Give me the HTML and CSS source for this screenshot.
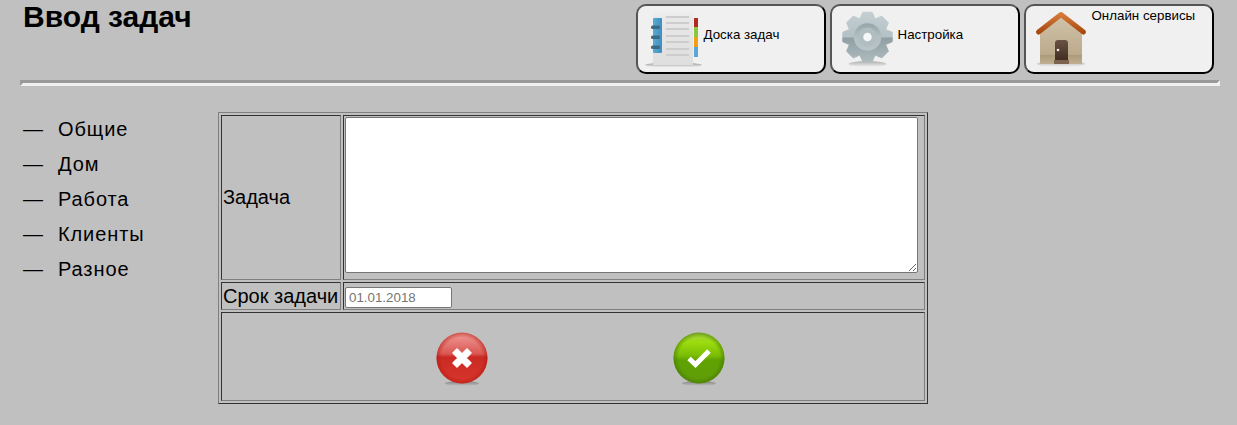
FILE: index.html
```html
<!DOCTYPE html>
<html lang="ru">
<head>
<meta charset="utf-8">
<title>Ввод задач</title>
<link rel="stylesheet" href="styles.css">
</head>
<body>
<header class="top">
  <h1 class="title">Ввод задач</h1>
  <nav class="tabs">
    <a class="tab">
      <svg class="tab-icon" width="60" height="62" viewBox="0 0 60 62">
        <defs>
          <linearGradient id="pg" x1="0" y1="0" x2="0" y2="1"><stop offset="0" stop-color="#f0f0f0"/><stop offset=".15" stop-color="#e8e8e8"/><stop offset="1" stop-color="#dedede"/></linearGradient>
          <linearGradient id="sp" x1="0" y1="0" x2="1" y2="0"><stop offset="0" stop-color="#5aa8d4"/><stop offset="1" stop-color="#3f8fbe"/></linearGradient>
          <linearGradient id="sh" x1="0" y1="0" x2="0" y2="1"><stop offset="0" stop-color="#80847c" stop-opacity=".8"/><stop offset="1" stop-color="#80847c" stop-opacity="0"/></linearGradient>
        </defs>
        <ellipse cx="31.500" cy="57" rx="28.500" ry="2.500" fill="url(#sh)"/>
        <rect x="11" y="2" width="40" height="55" fill="url(#pg)"/>
        <rect x="11" y="10" width="9" height="35" rx="1" fill="url(#sp)"/>
        <g fill="#cdcdcd">
          <rect x="24" y="8" width="23" height="2"/><rect x="24" y="14" width="23" height="2"/><rect x="24" y="20" width="23" height="2"/><rect x="24" y="27" width="23" height="2"/><rect x="24" y="33" width="23" height="2"/><rect x="24" y="40" width="23" height="2"/><rect x="24" y="46" width="23" height="2"/>
        </g>
        <g fill="#3c6a84">
          <rect x="9" y="17.500" width="9" height="3.500" rx="1.500"/><rect x="9" y="27.500" width="9" height="3.500" rx="1.500"/><rect x="9" y="37.500" width="9" height="3.500" rx="1.500"/>
        </g>
        <rect x="52" y="10" width="4" height="9" fill="#b32a20"/>
        <rect x="52" y="19" width="4" height="10" fill="#8cc63c"/>
        <rect x="52" y="29" width="4" height="10" fill="#f0a010"/>
        <rect x="52" y="39" width="4" height="10" fill="#5aa7d6"/>
      </svg>
      <span class="tab-text">Доска задач</span>
    </a>
    <a class="tab">
      <svg class="tab-icon" width="60" height="62" viewBox="0 0 60 62">
        <defs>
          <linearGradient id="g1" x1="0" y1="0" x2="0" y2="1"><stop offset="0" stop-color="#c4cfd2"/><stop offset=".5" stop-color="#b3c0c4"/><stop offset=".52" stop-color="#8f9fa4"/><stop offset="1" stop-color="#aebbbf"/></linearGradient>
          <linearGradient id="g2" x1="0" y1="0" x2="0" y2="1"><stop offset="0" stop-color="#94a4a9"/><stop offset=".5" stop-color="#b3bfc3"/><stop offset="1" stop-color="#b8c4c7"/></linearGradient>
          <linearGradient id="gs" x1="0" y1="0" x2="0" y2="1"><stop offset="0" stop-color="#80847c" stop-opacity=".6"/><stop offset="1" stop-color="#80847c" stop-opacity="0"/></linearGradient>
        </defs>
        <ellipse cx="31.500" cy="56" rx="19" ry="3" fill="url(#gs)"/>
        <g transform="translate(31.500 29) scale(.95)">
          <polygon fill="url(#g1)" stroke="url(#g1)" stroke-linejoin="round" stroke-width="1" points="-5,-26 5,-26 8,-19 15,-22 22,-15 19,-8 26,-5 26,5 19,8 22,15 15,22 8,19 5,26 -5,26 -8,19 -15,22 -22,15 -19,8 -26,5 -26,-5 -19,-8 -22,-15 -15,-22 -8,-19"/>
          <circle r="14.500" fill="url(#g2)"/>
          <circle r="10" fill="#b0bdc1"/>
          <circle r="4.500" fill="#f6f8f8"/>
        </g>
      </svg>
      <span class="tab-text">Настройка</span>
    </a>
    <a class="tab">
      <svg class="tab-icon" width="60" height="62" viewBox="0 0 60 62">
        <defs>
          <linearGradient id="w" x1="0" y1="0" x2="0" y2="1"><stop offset="0" stop-color="#d0c3aa"/><stop offset=".8" stop-color="#bcaa8b"/><stop offset=".82" stop-color="#ad9b7b"/><stop offset="1" stop-color="#c0af90"/></linearGradient>
          <linearGradient id="r" x1="0" y1="0" x2="0" y2="1"><stop offset="0" stop-color="#d67a3a"/><stop offset="1" stop-color="#a84a10"/></linearGradient>
          <linearGradient id="d" x1="0" y1="0" x2="0" y2="1"><stop offset="0" stop-color="#6a5144"/><stop offset="1" stop-color="#3b261c"/></linearGradient>
          <linearGradient id="hs" x1="0" y1="0" x2="0" y2="1"><stop offset="0" stop-color="#80847c" stop-opacity=".55"/><stop offset="1" stop-color="#80847c" stop-opacity="0"/></linearGradient>
        </defs>
        <ellipse cx="31" cy="56" rx="24" ry="3" fill="url(#hs)"/>
        <polygon points="10,25 31,8 52,25 52,56 10,56" fill="url(#w)"/>
        <path d="M25 56V35q0-3 3-3h7q3 0 3 3v21z" fill="url(#d)"/>
        <rect x="24" y="52" width="15" height="4" fill="#7d6350"/>
        <circle cx="28" cy="42" r="1.300" fill="#eee"/>
        <polyline points="8.500,24 31,6.500 53.500,24" fill="none" stroke="url(#r)" stroke-width="5" stroke-linecap="round" stroke-linejoin="round"/>
      </svg>
      <span class="tab-text tab-text-top">Онлайн сервисы</span>
    </a>
  </nav>
</header>
<hr class="rule">
<main class="content">
  <ul class="cats">
    <li class="cat"><span class="dash">—</span><span>Общие</span></li>
    <li class="cat"><span class="dash">—</span><span>Дом</span></li>
    <li class="cat"><span class="dash">—</span><span>Работа</span></li>
    <li class="cat"><span class="dash">—</span><span>Клиенты</span></li>
    <li class="cat"><span class="dash">—</span><span>Разное</span></li>
  </ul>
  <table class="form">
    <tr class="row-task">
      <td class="label">Задача</td>
      <td class="field"><textarea class="task-input"></textarea></td>
    </tr>
    <tr class="row-date">
      <td class="label">Срок задачи</td>
      <td class="field"><input class="date-input" type="text" placeholder="01.01.2018"></td>
    </tr>
    <tr class="row-actions">
      <td class="actions" colspan="2">
        <div class="action-row">
          <svg width="52" height="56" viewBox="0 0 52 56">
            <defs>
              <linearGradient id="rb" x1="0" y1="0" x2="0" y2="1"><stop offset="0" stop-color="#ef9d99"/><stop offset=".12" stop-color="#ea8985"/><stop offset=".42" stop-color="#da5751"/><stop offset=".48" stop-color="#c92b24"/><stop offset="1" stop-color="#d8352c"/></linearGradient>
              <radialGradient id="re"><stop offset=".8" stop-color="#b01810" stop-opacity="0"/><stop offset="1" stop-color="#b01810" stop-opacity=".55"/></radialGradient>
              <linearGradient id="bs" x1="0" y1="0" x2="0" y2="1"><stop offset="0" stop-color="#666" stop-opacity=".7"/><stop offset="1" stop-color="#666" stop-opacity="0"/></linearGradient>
            </defs>
            <ellipse cx="26" cy="51.500" rx="17" ry="2.500" fill="url(#bs)"/>
            <circle cx="26" cy="26" r="25.500" fill="url(#rb)"/>
            <circle cx="26" cy="26" r="25.500" fill="url(#re)"/>
            <path d="M17 21l4-4 5 5 5-5 4 4-5 5 5 5-4 4-5-5-5 5-4-4 5-5z" fill="#fff" stroke="#fff" stroke-width="1.500" stroke-linejoin="round"/>
          </svg>
          <svg width="52" height="56" viewBox="0 0 52 56">
            <defs>
              <linearGradient id="gb" x1="0" y1="0" x2="0" y2="1"><stop offset="0" stop-color="#a4d048"/><stop offset=".2" stop-color="#9cdc0c"/><stop offset=".46" stop-color="#78bc06"/><stop offset=".54" stop-color="#5fa202"/><stop offset="1" stop-color="#609c08"/></linearGradient>
              <radialGradient id="ge"><stop offset=".8" stop-color="#3f7004" stop-opacity="0"/><stop offset="1" stop-color="#3f7004" stop-opacity=".55"/></radialGradient>
              <linearGradient id="bs2" x1="0" y1="0" x2="0" y2="1"><stop offset="0" stop-color="#666" stop-opacity=".7"/><stop offset="1" stop-color="#666" stop-opacity="0"/></linearGradient>
            </defs>
            <ellipse cx="26" cy="51.500" rx="17" ry="2.500" fill="url(#bs2)"/>
            <circle cx="26" cy="26" r="25.500" fill="url(#gb)"/>
            <circle cx="26" cy="26" r="25.500" fill="url(#ge)"/>
            <path d="M16 26.500l6.500 6 13.500-13.500" fill="none" stroke="#fff" stroke-width="5" stroke-linejoin="miter"/>
          </svg>
        </div>
      </td>
    </tr>
  </table>
</main>
</body>
</html>
```

FILE: styles.css
```css
html, body {
  margin: 0;
  padding: 0;
}
body {
  background: #c0c0c0;
  color: #000;
  font-family: "Liberation Sans", Arial, sans-serif;
  height: 425px;
  overflow: hidden;
}
.top {
  display: flex;
  justify-content: space-between;
  align-items: flex-start;
  padding: 4px 23px 0 23px;
  height: 76px;
  box-sizing: border-box;
}
.title {
  margin: -5px 0 0;
  font-size: 30px;
  line-height: 35px;
  font-weight: bold;
}
.tabs {
  display: flex;
  gap: 4px;
}
.tab {
  display: flex;
  align-items: center;
  width: 190px;
  height: 70px;
  box-sizing: border-box;
  background: #f0f0f0;
  border: 2px solid;
  border-color: #555 #000 #000 #555;
  border-radius: 10px;
  padding-left: 4px;
  font-size: 13.330px;
}
.tab-icon {
  flex: none;
}
.tab-text {
  margin-left: 1.500px;
  margin-bottom: 10px;
}
.tab-text-top {
  align-self: flex-start;
  margin-top: 2px;
  margin-bottom: 0;
}
.rule {
  margin: 4px 17px 0 20px;
  height: 0;
  border: 3px solid;
  border-color: #9a9a9a #f0f0f0 #f0f0f0 #9a9a9a;
}
.content {
  display: flex;
  align-items: flex-start;
  margin-top: 26px;
  padding-left: 23px;
}
.cats {
  list-style: none;
  margin: 0;
  padding: 0;
  width: 195px;
  font-size: 20px;
  letter-spacing: 0.900px;
}
.cat {
  display: flex;
  height: 35px;
  line-height: 35px;
}
.dash {
  width: 35px;
}
.form {
  width: 710px;
  height: 292px;
  border: 1px solid;
  border-color: #808080 #333 #333 #808080;
  border-collapse: separate;
  border-spacing: 2px;
  font-size: 20px;
}
.form td {
  border: 1px solid;
  border-color: #333 #808080 #808080 #333;
  padding: 1px;
}
.row-task td {
  height: 161px;
}
.row-date td {
  height: 24px;
}
.form .actions {
  height: 85px;
}
.label {
  width: 116px;
  white-space: nowrap;
}
.form .field {
  vertical-align: top;
  text-align: left;
}
.task-input {
  display: block;
  width: 573px;
  height: 156px;
  box-sizing: border-box;
  margin: 0;
  background: #fff;
  border: 1px solid #767676;
  border-radius: 2px;
}
.date-input {
  display: block;
  width: 107px;
  height: 21px;
  box-sizing: border-box;
  margin: 3px 0 0;
  padding: 1px 3px;
  background: #fff;
  border: 1px solid #767676;
  border-radius: 2px;
  font: 13.330px "Liberation Sans", Arial, sans-serif;
}
.date-input::placeholder {
  color: #757575;
  opacity: 1;
}
.action-row {
  display: flex;
  justify-content: center;
  gap: 185px;
  padding-left: 15px;
  padding-top: 6px;
}
```
